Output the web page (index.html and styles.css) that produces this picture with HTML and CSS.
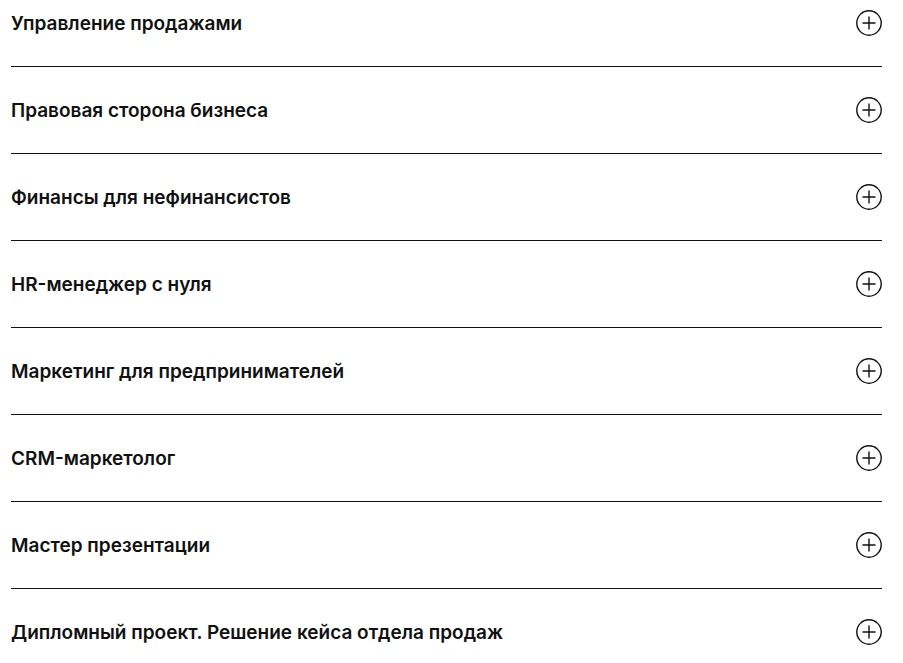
FILE: index.html
```html
<!DOCTYPE html>
<html lang="ru">
<head>
    <meta charset="UTF-8">
    <meta name="viewport" content="width=device-width, initial-scale=1.0">
    <title>Программа курса</title>
    <link rel="stylesheet" href="styles.css">
</head>
<body>
    <ul class="program">
        <li class="program-item">
            <span class="program-title">Управление продажами</span>
            <button class="toggle" aria-label="Раскрыть">
                <svg viewBox="0 0 26 26" width="26" height="26"><circle cx="13" cy="13" r="12.2"/><path d="M13 6.5v13M6.5 13h13"/></svg>
            </button>
        </li>
        <li class="program-item">
            <span class="program-title">Правовая сторона бизнеса</span>
            <button class="toggle" aria-label="Раскрыть">
                <svg viewBox="0 0 26 26" width="26" height="26"><circle cx="13" cy="13" r="12.2"/><path d="M13 6.5v13M6.5 13h13"/></svg>
            </button>
        </li>
        <li class="program-item">
            <span class="program-title">Финансы для нефинансистов</span>
            <button class="toggle" aria-label="Раскрыть">
                <svg viewBox="0 0 26 26" width="26" height="26"><circle cx="13" cy="13" r="12.2"/><path d="M13 6.5v13M6.5 13h13"/></svg>
            </button>
        </li>
        <li class="program-item">
            <span class="program-title">HR-менеджер с нуля</span>
            <button class="toggle" aria-label="Раскрыть">
                <svg viewBox="0 0 26 26" width="26" height="26"><circle cx="13" cy="13" r="12.2"/><path d="M13 6.5v13M6.5 13h13"/></svg>
            </button>
        </li>
        <li class="program-item">
            <span class="program-title">Маркетинг для предпринимателей</span>
            <button class="toggle" aria-label="Раскрыть">
                <svg viewBox="0 0 26 26" width="26" height="26"><circle cx="13" cy="13" r="12.2"/><path d="M13 6.5v13M6.5 13h13"/></svg>
            </button>
        </li>
        <li class="program-item">
            <span class="program-title">CRM-маркетолог</span>
            <button class="toggle" aria-label="Раскрыть">
                <svg viewBox="0 0 26 26" width="26" height="26"><circle cx="13" cy="13" r="12.2"/><path d="M13 6.5v13M6.5 13h13"/></svg>
            </button>
        </li>
        <li class="program-item">
            <span class="program-title">Мастер презентации</span>
            <button class="toggle" aria-label="Раскрыть">
                <svg viewBox="0 0 26 26" width="26" height="26"><circle cx="13" cy="13" r="12.2"/><path d="M13 6.5v13M6.5 13h13"/></svg>
            </button>
        </li>
        <li class="program-item">
            <span class="program-title">Дипломный проект. Решение кейса отдела продаж</span>
            <button class="toggle" aria-label="Раскрыть">
                <svg viewBox="0 0 26 26" width="26" height="26"><circle cx="13" cy="13" r="12.2"/><path d="M13 6.5v13M6.5 13h13"/></svg>
            </button>
        </li>
    </ul>
</body>
</html>
```

FILE: styles.css
```css
body {
    margin: 0;
    background: #fff;
    color: #111;
    font-family: Inter, "Noto Sans", Arial, sans-serif;
    overflow: hidden;
}
.program {
    list-style: none;
    margin: -20px 0 0;
    padding: 0 21px 0 11px;
}
.program-item {
    display: flex;
    align-items: center;
    justify-content: space-between;
    height: 86px;
    border-bottom: 1px solid #111;
}
.program-item:last-child {
    border-bottom: none;
}
.program-title {
    font-size: 19px;
    font-weight: 600;
}
.toggle {
    width: 26px;
    height: 26px;
    padding: 0;
    border: none;
    background: none;
    cursor: pointer;
    display: block;
}
.toggle svg {
    display: block;
    fill: none;
    stroke: #111;
    stroke-width: 1.4;
}
```
